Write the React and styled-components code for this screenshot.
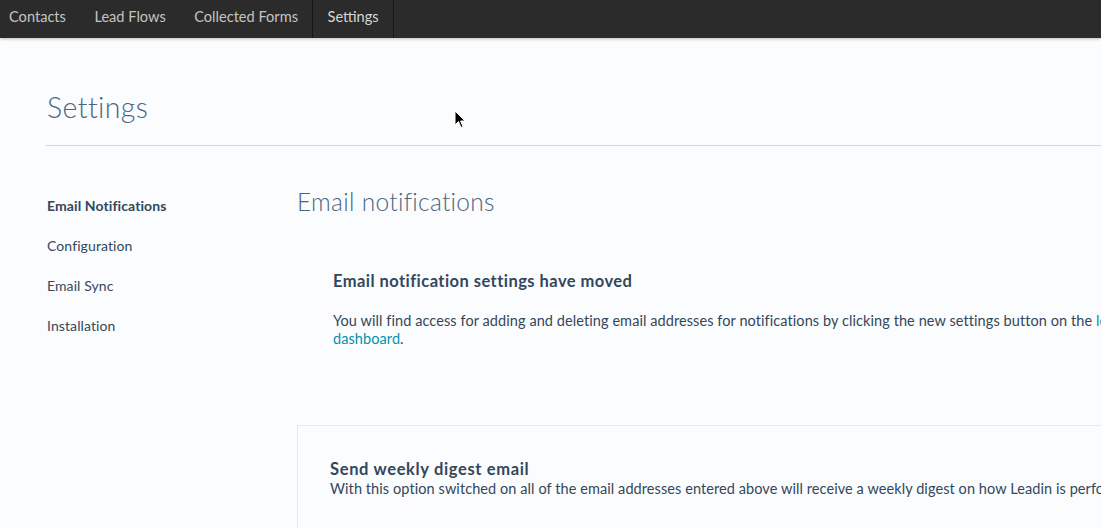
import React from "react";
import styled, { createGlobalStyle } from "styled-components";

const GlobalStyle = createGlobalStyle`
  html, body {
    margin: 0;
    padding: 0;
    background: #fbfcfd;
    overflow: hidden;
  }
  body {
    font-family: Lato, "Open Sans", sans-serif;
    color: #33475b;
  }
`;

const TopNav = styled.nav`
  display: flex;
  height: 38px;
  background: #2b2b2b;
  box-shadow: 0 1px 3px rgba(0, 0, 0, 0.25);
  position: relative;
  z-index: 2;
`;

const NavItem = styled.a`
  display: flex;
  align-items: center;
  padding: 0 14px 5px ${(p) => (p.first ? "9px" : "14.5px")};
  font-size: 14.6px;
  color: ${(p) => (p.active ? "#d6d6d6" : "#c4c4c4")};
  border-left: ${(p) => (p.active ? "1px solid #161616" : "none")};
  border-right: ${(p) => (p.active ? "1px solid #161616" : "none")};
  text-decoration: none;
  white-space: nowrap;
`;

const Page = styled.div`
  padding: 0 0 0 47px;
  position: relative;
`;

const PageHeader = styled.header`
  height: 108px;
  display: flex;
  align-items: flex-start;
  border-bottom: 1px solid #cbd6e2;
  margin-left: -1px;
  padding-left: 1px;
  box-sizing: border-box;
`;

const PageTitle = styled.h1`
  margin: 51px 0 0;
  font-size: 28.5px;
  line-height: 36px;
  font-weight: 300;
  color: #4a6582;
  letter-spacing: 0.4px;
`;

const Body = styled.div`
  display: flex;
  padding-top: 42px;
`;

const SideNav = styled.ul`
  list-style: none;
  margin: 0;
  padding: 0;
  width: 250px;
  flex-shrink: 0;
  display: flex;
  flex-direction: column;
  gap: 20px;
  padding-top: 8px;
`;

const SideItem = styled.li`
  font-size: 14px;
  line-height: 20px;
  letter-spacing: 0.1px;
  color: #33475b;
  font-weight: ${(p) => (p.active ? 700 : 400)};
`;

const Main = styled.main`
  flex: 1;
  min-width: 0;
`;

const SectionTitle = styled.h2`
  margin: 0;
  font-size: 24.5px;
  font-weight: 300;
  line-height: 28px;
  color: #4a6582;
  letter-spacing: 0.3px;
`;

const Notice = styled.div`
  padding: 53px 0 0 36px;
  height: 178px;
  box-sizing: border-box;
`;

const NoticeTitle = styled.h3`
  margin: 0 0 19px;
  font-size: 16.5px;
  line-height: 24px;
  font-weight: 700;
  letter-spacing: 0.45px;
  color: #33475b;
`;

const Text = styled.p`
  margin: 0;
  font-size: 14.5px;
  line-height: 18px;
  letter-spacing: 0.08px;
  color: #33475b;
  width: ${(p) => p.width || "auto"};
`;

const Link = styled.a`
  color: #0091ae;
  text-decoration: none;
`;

const Card = styled.section`
  margin-top: 31px;
  border: 1px solid #e5eaf0;
  border-right: none;
  padding: 32px 0 40px 32px;
  white-space: nowrap;
`;

const CardTitle = styled.h3`
  margin: 0;
  font-size: 16.5px;
  line-height: 22px;
  font-weight: 700;
  letter-spacing: 0.65px;
  color: #33475b;
`;

const Cursor = styled.svg`
  position: absolute;
  left: 454px;
  top: 110px;
  width: 12px;
  height: 19px;
  z-index: 5;
`;

export default function App() {
  return (
    <>
      <GlobalStyle />
      <TopNav>
        <NavItem first>Contacts</NavItem>
        <NavItem>Lead Flows</NavItem>
        <NavItem>Collected Forms</NavItem>
        <NavItem active>Settings</NavItem>
      </TopNav>
      <Cursor viewBox="0 0 12 19">
        <path d="M1 1 L1 15 L4.5 11.5 L7 17.5 L9 16.6 L6.6 11 L11 11 Z" fill="#000" stroke="#fff" strokeWidth="1" />
      </Cursor>
      <Page>
        <PageHeader>
          <PageTitle>Settings</PageTitle>
        </PageHeader>
        <Body>
          <SideNav>
            <SideItem active>Email Notifications</SideItem>
            <SideItem>Configuration</SideItem>
            <SideItem>Email Sync</SideItem>
            <SideItem>Installation</SideItem>
          </SideNav>
          <Main>
            <SectionTitle>Email notifications</SectionTitle>
            <Notice>
              <NoticeTitle>Email notification settings have moved</NoticeTitle>
              <Text width="830px">
                You will find access for adding and deleting email addresses for notifications by
                clicking the new settings button on the <Link>leadin</Link>{" "}
                <Link>dashboard</Link>.
              </Text>
            </Notice>
            <Card>
              <CardTitle>Send weekly digest email</CardTitle>
              <Text>
                With this option switched on all of the email addresses entered above will receive a
                weekly digest on how Leadin is performing.
              </Text>
            </Card>
          </Main>
        </Body>
      </Page>
    </>
  );
}
